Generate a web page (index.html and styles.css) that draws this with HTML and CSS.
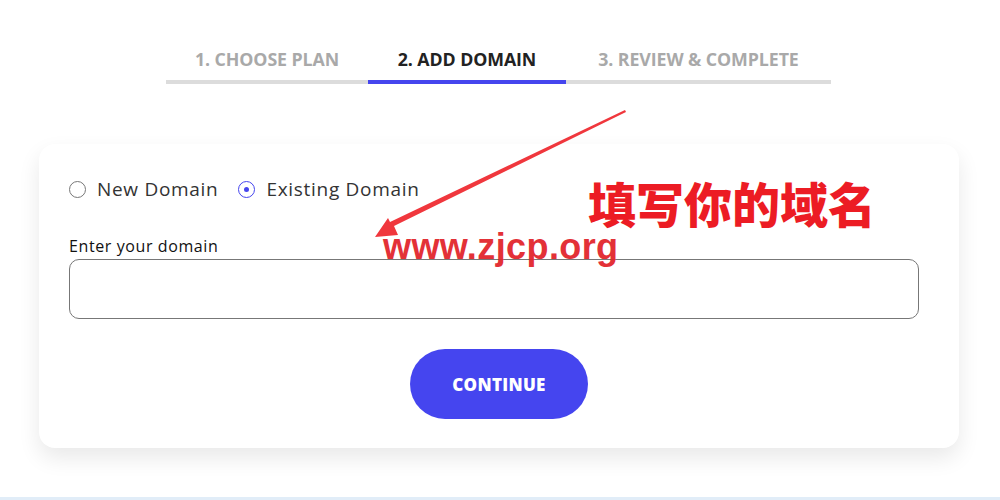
FILE: index.html
```html
<!DOCTYPE html>
<html lang="en">
<head>
<meta charset="utf-8">
<title>Add Domain</title>
<link rel="stylesheet" href="styles.css">
</head>
<body>
<div class="page">
  <nav class="steps">
    <div class="step">1. CHOOSE PLAN</div>
    <div class="step active">2. ADD DOMAIN</div>
    <div class="step wide">3. REVIEW &amp; COMPLETE</div>
  </nav>

  <section class="card">
    <div class="radios">
      <label class="radio"><span class="dot"></span>New Domain</label>
      <label class="radio checked"><span class="dot"></span>Existing Domain</label>
    </div>
    <div class="field-label">Enter your domain</div>
    <div class="input"></div>
    <div class="actions">
      <button class="btn">CONTINUE</button>
    </div>
  </section>

  <div class="footer-strip"></div>

  <svg class="arrow" width="1000" height="500" viewBox="0 0 1000 500">
    <polygon points="625,110 626,112 394,226 398,235 375,237 388,218 390,222" fill="#f0373d"/>
  </svg>
  <div class="note-cn">填写你的域名</div>
  <div class="note-url">www.zjcp.org</div>
</div>
</body>
</html>
```

FILE: styles.css
```css
html, body {
  margin: 0;
  padding: 0;
  background: #ffffff;
}
body {
  font-family: "Open Sans", "Liberation Sans", sans-serif;
  color: #222;
}
.page {
  position: relative;
  width: 1000px;
  height: 500px;
  overflow: hidden;
}
.steps {
  display: flex;
  padding-top: 46px;
  padding-left: 166px;
}
.step {
  width: 202px;
  text-align: center;
  font-size: 17.8px;
  font-weight: 700;
  line-height: 26px;
  letter-spacing: -0.1px;
  color: #a9a9a9;
  padding-bottom: 8px;
  border-bottom: 4px solid #dcdcdc;
}
.step.active {
  width: 198px;
  color: #222222;
  border-bottom-color: #4545ee;
}
.step.wide {
  width: 265px;
}
.card {
  width: 920px;
  box-sizing: border-box;
  margin: 60px 0 0 39px;
  padding: 33px 40px 29px 30px;
  background: #fff;
  border-radius: 16px;
  box-shadow: 0 10px 22px rgba(0, 0, 0, 0.09);
}
.radios {
  display: flex;
  gap: 20px;
  height: 24px;
  align-items: center;
}
.radio {
  display: flex;
  align-items: center;
  gap: 11px;
  font-size: 19px;
  letter-spacing: 0.7px;
  font-weight: 400;
  color: #333;
}
.dot {
  width: 15px;
  height: 15px;
  border: 1px solid #777;
  border-radius: 50%;
  display: flex;
  align-items: center;
  justify-content: center;
}
.radio.checked .dot {
  border-color: #4545ee;
}
.radio.checked .dot::after {
  content: "";
  width: 5px;
  height: 5px;
  border-radius: 50%;
  background: #4545ee;
}
.field-label {
  margin-top: 35px;
  font-size: 16px;
  letter-spacing: 0.6px;
  line-height: 20px;
  font-weight: 500;
  color: #111;
}
.input {
  margin-top: 3px;
  width: 850px;
  height: 60px;
  box-sizing: border-box;
  border: 1px solid #777;
  border-radius: 10px;
}
.actions {
  display: flex;
  justify-content: center;
  margin-top: 30px;
  padding-left: 10px;
}
.btn {
  width: 178px;
  height: 70px;
  border: none;
  border-radius: 35px;
  background: #4545ef;
  color: #fff;
  font-family: "Open Sans", "Liberation Sans", sans-serif;
  font-size: 17px;
  letter-spacing: 0.3px;
  font-weight: 800;
}
.footer-strip {
  position: absolute;
  left: 0;
  bottom: 0;
  width: 1000px;
  height: 3px;
  background: #e1edf8;
}
.arrow {
  position: absolute;
  left: 0;
  top: 0;
  pointer-events: none;
}
.note-cn {
  position: absolute;
  left: 588px;
  top: 178px;
  font-family: "Noto Sans CJK SC", sans-serif;
  font-size: 48px;
  line-height: 48px;
  font-weight: 900;
  color: #ec1c24;
}
.note-url {
  position: absolute;
  left: 383px;
  top: 229px;
  font-family: "Liberation Sans", sans-serif;
  font-size: 36px;
  line-height: 36px;
  font-weight: 700;
  letter-spacing: 0.4px;
  color: #e2262d;
  opacity: 0.95;
}
```
